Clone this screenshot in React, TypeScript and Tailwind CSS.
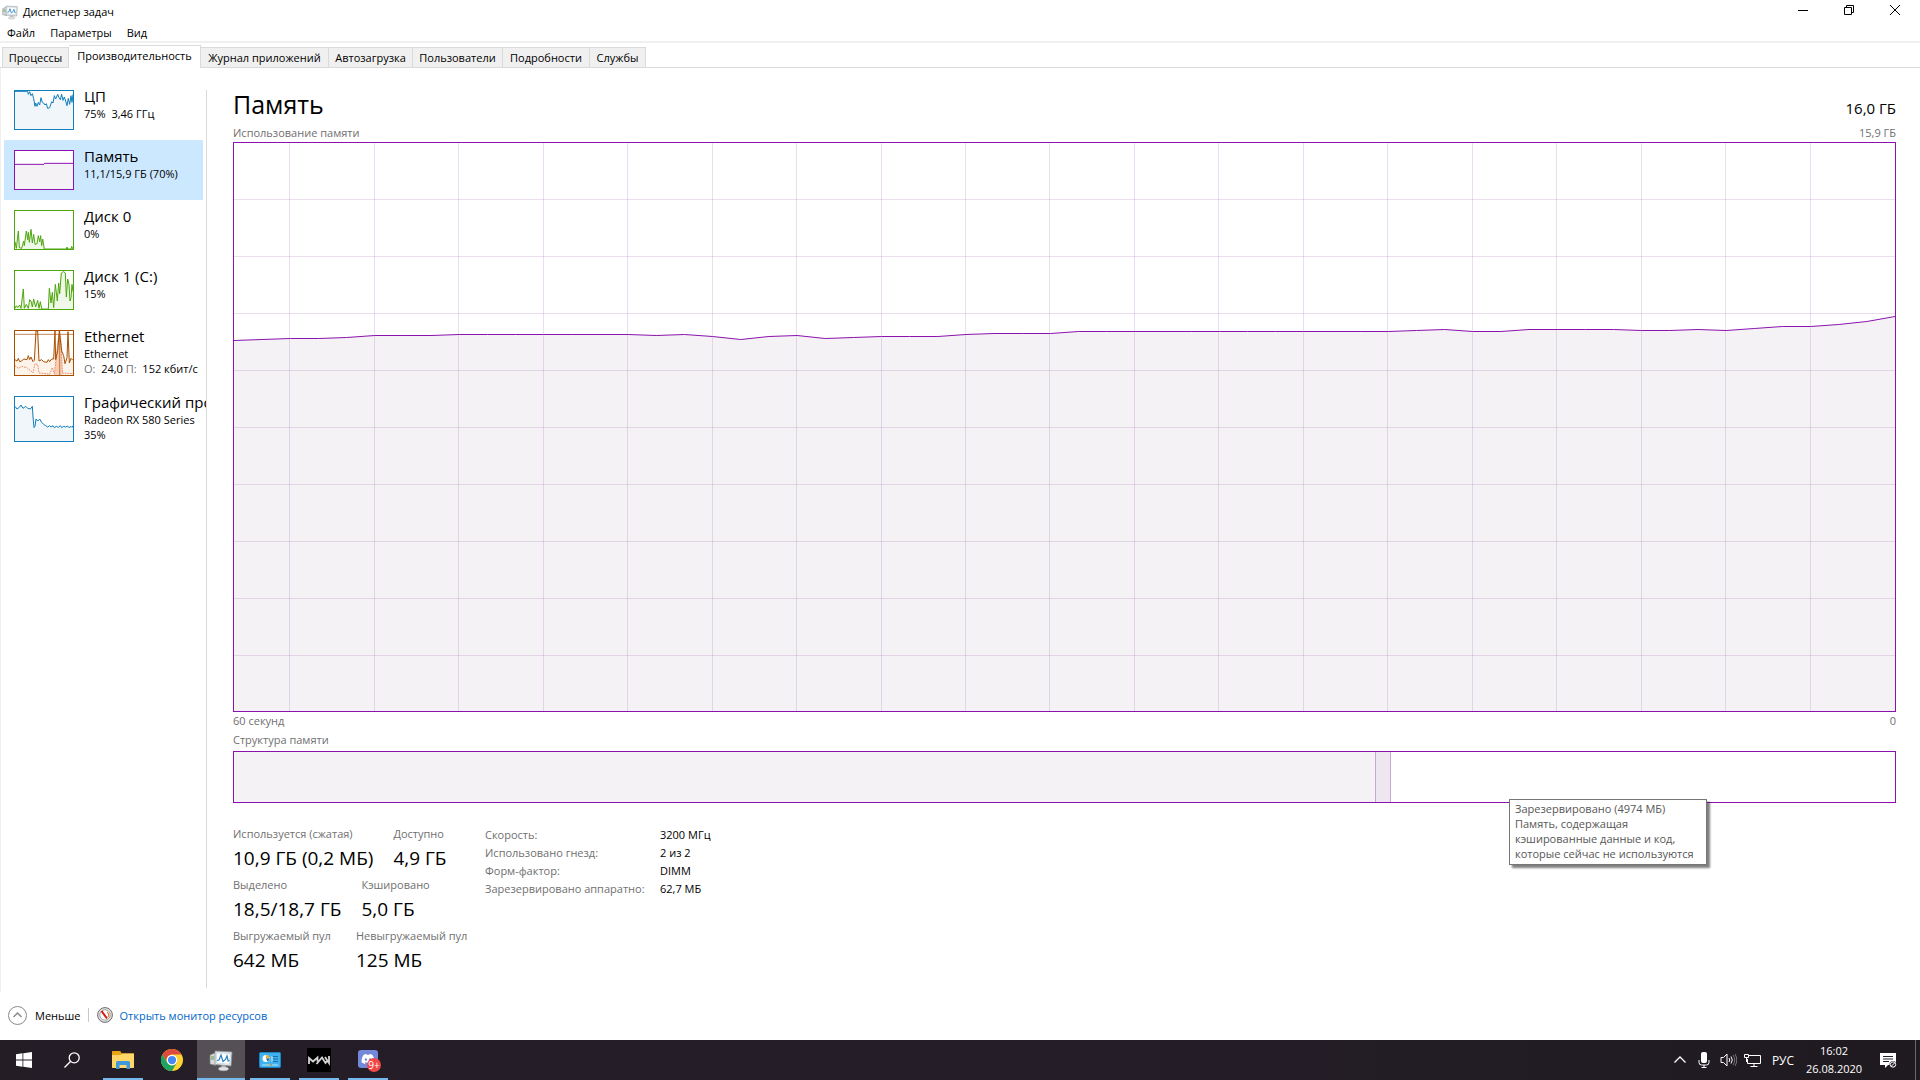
import type React from "react"
import { FaDiscord } from "react-icons/fa"

interface Tab {
  title: string
  width: string
  active?: boolean
}

interface Device {
  name: string
  lines: React.ReactNode[]
  chart: React.ReactNode
  color: string
  selected?: boolean
  tall?: boolean
}

const tabs: Tab[] = [
  { title: "Процессы", width: "w-[67px]" },
  { title: "Производительность", width: "w-[132px]", active: true },
  { title: "Журнал приложений", width: "w-[128px]" },
  { title: "Автозагрузка", width: "w-[84px]" },
  { title: "Пользователи", width: "w-[90px]" },
  { title: "Подробности", width: "w-[87px]" },
  { title: "Службы", width: "w-[56px]" },
]

// one sample per second, oldest first, y inside the 568px plot
const samples = [
  197, 196, 195, 195, 194, 192, 192, 192, 191, 191, 191, 191, 191, 191, 191, 192, 191, 193, 196, 193,
  192, 195, 194, 193, 193, 193, 191, 190, 190, 190, 188, 188, 188, 188, 188, 188, 188, 188, 188, 188,
  188, 188, 187, 186, 188, 188, 186, 186, 186, 186, 187, 187, 186, 187, 185, 183, 183, 181, 178, 173,
]

const devices: Device[] = [
  {
    name: "ЦП",
    lines: ["75%  3,46 ГГц"],
    color: "border-[#117dbb]",
    chart: (
      <MiniChart
        height={114}
        stroke="#117dbb"
        fill="#f1f6fa"
        points="0,1 38,1 40,10 44,2 48,14 52,8 56,22 60,46 62,36 66,46 70,34 74,42 78,20 82,34 86,36 90,42 94,38 98,52 104,50 110,32 114,36 118,14 122,24 128,10 132,20 136,26 140,10 144,28 148,18 152,30 156,44 160,22 164,40 168,14 171,34 174,10"
      />
    ),
  },
  {
    name: "Память",
    lines: ["11,1/15,9 ГБ (70%)"],
    color: "border-[#8b12ae]",
    selected: true,
    chart: <MiniChart height={114} stroke="#8b12ae" fill="#f4f2f4" points="0,40 87,40 89,37 174,37" />,
  },
  {
    name: "Диск 0",
    lines: ["0%"],
    color: "border-[#4da60c]",
    chart: (
      <MiniChart
        height={114}
        stroke="#4da60c"
        fill="#eff7e9"
        points="0,92 4,112 10,60 13,110 20,112 26,90 28,104 34,60 38,86 40,64 43,94 48,55 52,96 56,70 60,100 66,98 70,74 74,92 77,74 80,104 83,84 88,114 154,114 156,108 158,114 168,114 170,106 174,114"
      />
    ),
  },
  {
    name: "Диск 1 (C:)",
    lines: ["15%"],
    color: "border-[#4da60c]",
    chart: (
      <MiniChart
        height={114}
        stroke="#4da60c"
        fill="#eff7e9"
        points="0,112 4,104 8,110 14,102 18,112 25,54 28,112 34,100 40,112 44,86 48,90 52,108 56,84 62,108 68,88 72,112 76,92 80,114 100,114 103,52 108,96 112,64 116,110 121,40 127,90 131,36 134,68 139,6 142,4 146,2 151,6 154,78 158,24 162,40 165,90 168,80 171,40 174,62"
      />
    ),
  },
  {
    name: "Ethernet",
    tall: true,
    lines: [
      "Ethernet",
      <>
        <span className="text-[#707070]">О: </span> 24,0 <span className="text-[#707070]">П: </span> 152 кбит/с
      </>,
    ],
    color: "border-[#a74f01]",
    chart: (
      <MiniChart
        height={132}
        stroke="#a74f01"
        fill="#fcf3eb"
        points="0,86 6,90 10,82 14,92 20,90 26,84 36,86 40,74 44,86 48,78 54,92 58,88 63,0 68,0 72,90 80,86 86,92 96,94 100,86 104,92 110,84 116,84 120,0 122,86 128,60 133,0 140,60 146,74 150,98 156,80 159,2 163,96 168,82 174,88"
      >
        <polygon fill="#f7cdb8" points="118,132 124,70 130,14 134,4 139,40 143,132" />
        <path d="M0 10H174" stroke="#c48a5c" strokeWidth="3" />
        <path d="M134 0V132" stroke="#a74f01" strokeWidth="2" />
        <polyline
          fill="none"
          stroke="#ef8a62"
          strokeWidth="3"
          strokeDasharray="5 3"
          points="0,104 10,112 20,106 36,110 42,116 48,120 54,126 60,98 68,100 72,126 90,128 104,130 112,110 118,128 126,60 130,20 134,4 138,30 142,126 174,128"
        />
      </MiniChart>
    ),
  },
  {
    name: "Графический процессор 0",
    tall: true,
    lines: ["Radeon RX 580 Series", "35%"],
    color: "border-[#117dbb]",
    chart: (
      <MiniChart
        height={132}
        stroke="#117dbb"
        fill="#f1f6fa"
        points="0,28 6,36 14,30 18,24 24,34 32,28 38,34 46,36 52,28 54,60 57,92 60,88 63,66 68,72 74,66 80,76 86,82 92,86 98,90 104,86 108,90 114,86 118,92 124,88 130,91 136,86 140,92 146,88 152,90 158,87 162,92 168,88 171,91 174,86"
      />
    ),
  },
]

const stats = [
  [
    ["Используется (сжатая)", "10,9 ГБ (0,2 МБ)"],
    ["Доступно", "4,9 ГБ"],
  ],
  [
    ["Выделено", "18,5/18,7 ГБ"],
    ["Кэшировано", "5,0 ГБ"],
  ],
  [
    ["Выгружаемый пул", "642 МБ"],
    ["Невыгружаемый пул", "125 МБ"],
  ],
]

const hardware = [
  ["Скорость:", "3200 МГц"],
  ["Использовано гнезд:", "2 из 2"],
  ["Форм-фактор:", "DIMM"],
  ["Зарезервировано аппаратно:", "62,7 МБ"],
]

interface MiniChartProps {
  points: string
  stroke: string
  fill: string
  height: number
  children?: React.ReactNode
}

function MiniChart({ points, stroke, fill, height, children }: MiniChartProps) {
  return (
    <svg viewBox={`0 0 174 ${height}`} preserveAspectRatio="none" className="block h-full w-full">
      <polygon fill={fill} points={`0,${height} ${points} 174,${height}`} />
      {children}
      <polyline fill="none" stroke={stroke} strokeWidth="3" points={points} />
    </svg>
  )
}

const DeviceItem: React.FC<{ device: Device }> = ({ device }) => (
  <button
    className={`flex w-[199px] shrink-0 gap-[10px] pt-[10px] pl-[10px] text-left ${device.tall ? "h-[66px]" : "h-[60px]"} ${
      device.selected ? "bg-[#cce8ff]" : ""
    }`}
  >
    <span className={`w-[60px] shrink-0 border bg-white ${device.tall ? "h-[46px]" : "h-[40px]"} ${device.color}`}>
      {device.chart}
    </span>
    <span className="-mt-1 block whitespace-pre">
      <span className="block text-[15px] leading-5">{device.name}</span>
      {device.lines.map((line, i) => (
        <span key={i} className="block leading-[15px]">
          {line}
        </span>
      ))}
    </span>
  </button>
)

const MemoryChart: React.FC = () => {
  const step = 1661 / (samples.length - 1)
  const points = samples.map((y, i) => `${i * step},${y + 0.5}`).join(" ")
  return (
    <div className="min-h-0 flex-1 border border-[#8b12ae]">
      <svg viewBox="0 0 1661 568" preserveAspectRatio="none" className="block h-full w-full">
        <polygon fill="#f4f2f4" points={`0,568 ${points} 1661,568`} />
        <g stroke="#80239b" strokeOpacity="0.15" shapeRendering="crispEdges">
          {Array.from({ length: 9 }, (_, i) => (
            <path key={i} d={`M0 ${56.5 + i * 57}H1661`} />
          ))}
          {Array.from({ length: 19 }, (_, i) => (
            <path key={i} d={`M${(2 + i * 3) * step - 0.5} 0V568`} />
          ))}
        </g>
        <polyline fill="none" stroke="#8b12ae" points={points} />
      </svg>
    </div>
  )
}

const TaskManagerIcon: React.FC<{ className: string }> = ({ className }) => (
  <svg viewBox="0 0 24 24" className={className}>
    <path d="M1 7l6-2.500v13L1 16z" fill="#d8dcd8" stroke="#7b807c" strokeWidth=".7" />
    <path d="M2 9h3M2 11h3" stroke="#5d9b4c" />
    <path d="M6 3L23 4l-1 14-16-1.500z" fill="#e9ebea" stroke="#8b9095" strokeWidth=".8" />
    <path d="M7.500 4.800l13.800.8-.8 10.600-13-1.200z" fill="#fff" stroke="#a9c4da" strokeWidth=".5" />
    <path d="M8 12.500l2-.5 2-5 2 6.500 2.500-2 1.500-3.500 1.200 5 1.300-.5" fill="none" stroke="#2181c4" strokeWidth="1.200" />
    <path d="M12.500 17.500h4l.5 2.500h-5z" fill="#b9bdc0" />
    <ellipse cx="14.500" cy="20.800" rx="5" ry="2" fill="#dfe2e3" stroke="#9b9fa2" strokeWidth=".5" />
  </svg>
)

const ExplorerIcon = () => (
  <svg viewBox="0 0 22 20" className="h-5 w-[22px]">
    <path d="M0 1.500Q0 1 .8 1h7.400l1.600 2.500H21q1 0 1 1V17q0 1-1 1H1q-1 0-1-1z" fill="#eaa514" />
    <path d="M0 5h8.500l1.800-1.500H22V17q0 1-1 1H1q-1 0-1-1z" fill="#ffd667" />
    <path d="M4 19v-6.500q0-1.500 1.500-1.500h11q1.500 0 1.500 1.500V19h-3.500v-4h-7v4z" fill="#3f97dc" />
  </svg>
)

const ChromeIcon = () => (
  <svg viewBox="0 0 48 48" className="h-[22px] w-[22px]">
    <circle cx="24" cy="24" r="24" fill="#fdd231" />
    <path d="M3.200 12A24 24 0 0 1 44.800 12H24A12 12 0 0 0 13.600 30z" fill="#de4b3c" />
    <path d="M3.200 12L13.600 30A12 12 0 0 0 34.400 30L24 48A24 24 0 0 1 3.200 12z" fill="#1da362" />
    <circle cx="24" cy="24" r="11.500" fill="#fff" />
    <circle cx="24" cy="24" r="9" fill="#4587f3" />
  </svg>
)

const ControlPanelIcon = () => (
  <svg viewBox="0 0 22 18" className="h-[18px] w-[22px]">
    <rect x=".5" y="1.500" width="21" height="15" rx="1" fill="#3fb2ee" stroke="#1d83c4" />
    <circle cx="7" cy="7.500" r="3.500" fill="#fff" />
    <path d="M7 7.500V4a3.500 3.500 0 0 1 3.500 3.500z" fill="#f2a72e" />
    <path d="M7 7.500h3.500a3.500 3.500 0 0 1-2 3z" fill="#1b6fae" />
    <path d="M13 5.500h6M14 8h5M13 10.500h6" stroke="#1b6fae" strokeWidth="1.200" />
    <path d="M13 5V11" stroke="#d8f0fd" />
    <path d="M3 14h7M13 14h6" stroke="#bfe6fb" />
    <path d="M11 12.800v2.400" stroke="#f2a72e" strokeWidth="1.500" />
  </svg>
)

const ModernWarfareIcon = () => (
  <svg viewBox="0 0 24 24" className="h-6 w-6">
    <path d="M0 0h24v24H0z" fill="#000" />
    <path
      d="M2 16V10l4 3.500L10.500 9.500V13.500M9.500 16l5.500-6.500L18.500 15l2.500-3M18 9l4 6V8"
      fill="none"
      stroke="#d4d4d4"
      strokeWidth="1.800"
    />
  </svg>
)

interface TaskButtonProps {
  label: string
  running?: boolean
  active?: boolean
  children: React.ReactNode
}

const TaskButton: React.FC<TaskButtonProps> = ({ label, running, active, children }) => (
  <button
    aria-label={label}
    className={`flex h-full w-12 flex-col items-center ${active ? "bg-[#555056]" : ""}`}
  >
    <span className="flex flex-1 items-center">{children}</span>
    {running && <span className={`-mt-0.5 h-0.5 bg-[#76b9ed] ${active ? "w-full" : "w-10"}`} />}
  </button>
)

const Taskbar: React.FC = () => (
  <footer className="flex h-10 shrink-0 items-stretch bg-linear-to-r from-[#241d26] via-[#251e29] to-[#1f1a20] text-white">
    <TaskButton label="Пуск">
      <svg viewBox="0 0 16 16" className="h-4 w-4" fill="#fff">
        <path d="M0 2.200L6.500 1.300v6.300H0zM7.300 1.200L16 0v7.600H7.300zM0 8.400h6.500v6.300L0 13.800zM7.300 8.400H16V16l-8.700-1.200z" />
      </svg>
    </TaskButton>
    <TaskButton label="Поиск">
      <svg viewBox="0 0 16 16" className="h-4 w-4" fill="none" stroke="#fff" strokeWidth="1.300">
        <circle cx="10.200" cy="5.800" r="5" />
        <path d="M6.700 9.300L.5 15.500" />
      </svg>
    </TaskButton>
    <div className="ml-[3px] flex gap-px">
      <TaskButton label="Проводник" running>
        <ExplorerIcon />
      </TaskButton>
      <TaskButton label="Google Chrome">
        <ChromeIcon />
      </TaskButton>
      <TaskButton label="Диспетчер задач" running active>
        <TaskManagerIcon className="h-6 w-6" />
      </TaskButton>
      <TaskButton label="Панель управления" running>
        <ControlPanelIcon />
      </TaskButton>
      <TaskButton label="Modern Warfare" running>
        <ModernWarfareIcon />
      </TaskButton>
      <TaskButton label="Discord" running>
        <span className="relative flex h-5 w-5 items-start">
          <span className="flex h-[18px] w-5 items-center justify-center rounded-[3px] bg-[#7289da]">
            <FaDiscord className="h-[14px] w-[14px]" />
          </span>
          <span className="absolute top-2 left-[9px] flex h-[14px] w-[14px] items-center justify-center rounded-full bg-[#f04747] text-[10px] leading-none">
            9+
          </span>
        </span>
      </TaskButton>
    </div>
    <div className="ml-auto flex items-center">
      <button aria-label="Показать скрытые значки" className="w-6">
        <svg viewBox="0 0 12 12" className="mx-auto h-3 w-3" fill="none" stroke="#fff" strokeWidth="1.300">
          <path d="M.5 8.500L6 3l5.500 5.500" />
        </svg>
      </button>
      <button aria-label="Микрофон" className="w-6">
        <svg viewBox="0 0 12 16" className="mx-auto h-4 w-3" fill="none" stroke="#fff">
          <rect x="3.500" y=".5" width="5" height="10" rx="1" fill="#fff" />
          <path d="M1 8v2.500q0 2.500 2.500 2.500h5q2.500 0 2.500-2.500V8M6 13v2.500M3.500 15.500h5" />
        </svg>
      </button>
      <button aria-label="Громкость" className="w-6">
        <svg viewBox="0 0 17 16" className="mx-auto h-4 w-[17px]" fill="none" stroke="#fff">
          <path d="M1 5.500h2.500L7 2v12l-3.500-3.500H1z" />
          <path d="M9 6q1.500 2 0 4M11 4.500q2.600 3.500 0 7" />
          <path d="M13 3q3.500 5 0 10M15 2q3.500 6 0 12" stroke="#77727a" />
        </svg>
      </button>
      <button aria-label="Сеть" className="w-6">
        <svg viewBox="0 0 17 14" className="mx-auto h-[14px] w-[17px]" fill="none" stroke="#fff">
          <path d="M5 2.500h11.500v8H3.500V6M10 10.500v3M6.500 13.500h7" />
          <path d="M.5 1.500h4v3h-4zM2.500 4.500V9" />
        </svg>
      </button>
      <button className="w-[38px] text-[12px]">РУС</button>
      <button className="w-16 text-center text-[11px] leading-[18px]">
        16:02
        <br />
        26.08.2020
      </button>
      <button aria-label="Центр уведомлений" className="w-11">
        <svg viewBox="0 0 17 17" className="mx-auto h-[17px] w-[17px]">
          <path d="M0 1h16v12H8l-3 3v-3H0z" fill="#fff" />
          <path d="M3 4.500h10M3 7h10M3 9.500h6" stroke="#251e29" />
          <circle cx="13" cy="12.500" r="3.500" fill="#251e29" />
          <circle cx="13" cy="12.500" r="2.700" fill="none" stroke="#fff" />
          <path d="M11 14.500l4-4" stroke="#fff" />
        </svg>
      </button>
      <button aria-label="Свернуть все окна" className="ml-[5px] h-full w-[5px] border-l border-[#6c676e]" />
    </div>
  </footer>
)

const TitleBar: React.FC = () => (
  <header className="flex h-6 shrink-0 items-center gap-[5px] pb-px pl-[2px]">
    <TaskManagerIcon className="h-4 w-4" />
    <h1>Диспетчер задач</h1>
    <div className="ml-auto flex self-start">
      <button aria-label="Свернуть" className="flex h-5 w-[46px] items-center justify-center">
        <svg viewBox="0 0 10 10" className="h-[10px] w-[10px]" stroke="#000">
          <path d="M0 5.500h10" />
        </svg>
      </button>
      <button aria-label="Восстановить" className="flex h-5 w-[46px] items-center justify-center">
        <svg viewBox="0 0 10 10" className="h-[10px] w-[10px]" fill="none" stroke="#000">
          <path d="M.5 2.500h7v7h-7zM2.500 2.500v-2h7v7h-2" />
        </svg>
      </button>
      <button aria-label="Закрыть" className="mr-[2px] flex h-5 w-[46px] items-center justify-center">
        <svg viewBox="0 0 10 10" className="h-[10px] w-[10px]" stroke="#000">
          <path d="M0 0l10 10M10 0L0 10" />
        </svg>
      </button>
    </div>
  </header>
)

export default function App() {
  return (
    <div className="flex h-screen flex-col overflow-hidden bg-white font-['Open_Sans','Noto_Sans',sans-serif] text-[11px] leading-[15px] text-black">
      <TitleBar />
      <nav className="flex h-[19px] shrink-0 items-center gap-[15px] border-b-2 border-[#f0f0f0] pl-[7px]">
        <button>Файл</button>
        <button>Параметры</button>
        <button>Вид</button>
      </nav>
      <div role="tablist" className="flex h-[25px] shrink-0 items-end border-b border-[#dadada] pl-[2px]">
        {tabs.map((tab) => (
          <button
            key={tab.title}
            role="tab"
            aria-selected={!!tab.active}
            className={`${tab.width} whitespace-nowrap border-t border-r border-[#dadada] text-center ${
              tab.active ? "-mb-px h-[23px] bg-white pb-1" : "h-5 bg-[#f0f0f0] first:border-l"
            }`}
          >
            {tab.title}
          </button>
        ))}
      </div>

      <main className="flex min-h-0 flex-1 border-l border-[#f0f0f0]">
        <aside className="flex w-[205px] shrink-0 flex-col overflow-hidden pt-3 pl-[3px]">
          {devices.map((device) => (
            <DeviceItem key={device.name} device={device} />
          ))}
        </aside>
        <div className="mt-[22px] mb-1 w-px shrink-0 bg-[#dadada]" />

        <section className="flex min-w-0 flex-1 flex-col pt-[18px] pr-6 pb-[18px] pl-[26px]">
          <div className="flex items-baseline justify-between">
            <h2 className="text-[25px] leading-9">Память</h2>
            <span className="text-[15px]">16,0 ГБ</span>
          </div>
          <div className="mt-[3px] flex justify-between pb-[2px] text-[#707070]">
            <span>Использование памяти</span>
            <span>15,9 ГБ</span>
          </div>
          <MemoryChart />
          <div className="mt-px flex justify-between text-[#707070]">
            <span>60 секунд</span>
            <span>0</span>
          </div>
          <p className="my-1 text-[#707070]">Структура памяти</p>
          <div className="relative flex h-[52px] shrink-0 border border-[#8b12ae]">
            <span className="w-[1142px] border-r border-[#c6a9d0] bg-[#f4f2f4]" />
            <span className="w-[15px] border-r border-[#c6a9d0] bg-[#eee6f1]" />
            <div
              role="tooltip"
              className="absolute top-[47px] right-[188px] w-[198px] border border-[#767676] bg-white px-[5px] pt-px pb-[3px] text-[#575757] shadow-[3px_3px_2px_rgba(0,0,0,0.5)]"
            >
              Зарезервировано (4974 МБ)
              <br />
              Память, содержащая
              <br />
              кэшированные данные и код,
              <br />
              которые сейчас не используются
            </div>
          </div>

          <div className="mt-[22px] flex">
            <div className="flex w-[252px] shrink-0 flex-col gap-1">
              {stats.map((row, i) => (
                <dl key={i} className="flex gap-5 whitespace-nowrap">
                  {row.map(([label, value]) => (
                    <div key={label} className="min-w-[103px] shrink-0">
                      <dt className="pb-[2px] leading-[18px] text-[#707070]">{label}</dt>
                      <dd className="text-[19px] leading-[27px]">{value}</dd>
                    </div>
                  ))}
                </dl>
              ))}
            </div>
            <table className="self-start">
              <tbody>
                {hardware.map(([label, value]) => (
                  <tr key={label} className="h-[18px]">
                    <th className="w-[175px] p-0 text-left font-normal text-[#707070]">{label}</th>
                    <td className="p-0">{value}</td>
                  </tr>
                ))}
              </tbody>
            </table>
          </div>
        </section>
      </main>

      <div className="flex h-12 shrink-0 items-center pb-[2px] pl-2">
        <button className="flex items-center gap-2">
          <svg viewBox="0 0 19 19" className="h-[19px] w-[19px]" fill="none" stroke="#8a8a8a">
            <circle cx="9.500" cy="9.500" r="9" />
            <path d="M5.500 11l4-4 4 4" strokeWidth="1.500" />
          </svg>
          Меньше
        </button>
        <span className="mx-2 h-[14px] w-px bg-[#c8c8c8]" />
        <a href="#resmon" className="flex items-center gap-[6px] text-[#0066cc]">
          <svg viewBox="0 0 16 16" className="h-4 w-4">
            <circle cx="8" cy="8" r="7.400" fill="#e4e4e4" stroke="#6a6a6a" />
            <circle cx="8" cy="8" r="5.200" fill="#fff" stroke="#8d8d8d" strokeWidth=".8" />
            <path d="M10 5a3.500 3.500 0 0 1 1 5" fill="none" stroke="#e8833a" strokeWidth="1.300" />
            <path d="M4.500 4l5.500 7.500" stroke="#d21414" strokeWidth="2" />
          </svg>
          Открыть монитор ресурсов
        </a>
      </div>
      <Taskbar />
    </div>
  )
}
